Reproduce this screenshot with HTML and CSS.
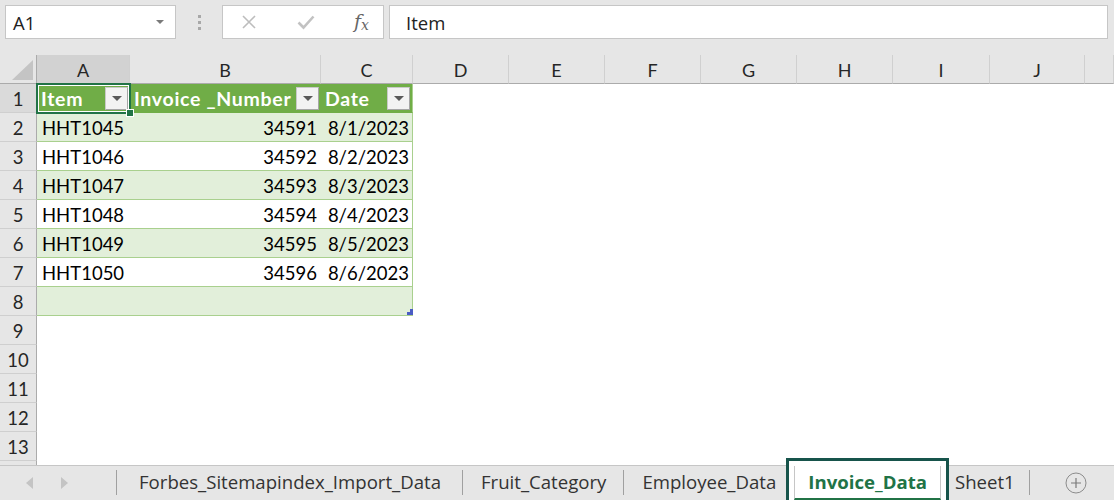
FILE: index.html
```html
<!DOCTYPE html>
<html lang="en">
<head>
<meta charset="utf-8">
<title>Invoice_Data</title>
<link rel="stylesheet" href="styles.css">
</head>
<body>
<div class="app">
  <div class="formula-bar">
    <div class="name-box">
      <span>A1</span>
      <svg class="caret" width="8" height="5" viewBox="0 0 8 5"><path d="M0 0h8L4 4z" fill="#7a7a7a"/></svg>
    </div>
    <div class="grip"><i></i><i></i><i></i></div>
    <div class="fx-box">
      <svg class="fx-icon" width="16" height="16" viewBox="0 0 16 16"><path d="M2 2l12 12M14 2L2 14" stroke="#bdbdbd" stroke-width="1.6" fill="none"/></svg>
      <svg class="fx-icon" width="18" height="16" viewBox="0 0 18 16"><path d="M1.5 8.5l5 5L16.5 2.5" stroke="#c2c2c2" stroke-width="2.6" fill="none"/></svg>
      <span class="fx">f<sub>x</sub></span>
    </div>
    <div class="formula-input">Item</div>
  </div>

  <div class="sheet">
    <div class="row col-heads">
      <div class="corner"><span class="corner-tri"></span></div>
      <div class="ch active">A</div>
      <div class="ch">B</div>
      <div class="ch">C</div>
      <div class="ch">D</div>
      <div class="ch">E</div>
      <div class="ch">F</div>
      <div class="ch">G</div>
      <div class="ch">H</div>
      <div class="ch">I</div>
      <div class="ch">J</div>
      <div class="ch"></div>
    </div>

    <div class="row">
      <div class="rh active">1</div>
      <div class="c th">Item<span class="filter"></span></div>
      <div class="c th">Invoice _Number<span class="filter"></span></div>
      <div class="c th last">Date<span class="filter"></span></div>
      <div class="blank"></div>
    </div>
    <div class="row band">
      <div class="rh">2</div>
      <div class="c">HHT1045</div>
      <div class="c num">34591</div>
      <div class="c num last">8/1/2023</div>
      <div class="blank"></div>
    </div>
    <div class="row">
      <div class="rh">3</div>
      <div class="c">HHT1046</div>
      <div class="c num">34592</div>
      <div class="c num last">8/2/2023</div>
      <div class="blank"></div>
    </div>
    <div class="row band">
      <div class="rh">4</div>
      <div class="c">HHT1047</div>
      <div class="c num">34593</div>
      <div class="c num last">8/3/2023</div>
      <div class="blank"></div>
    </div>
    <div class="row">
      <div class="rh">5</div>
      <div class="c">HHT1048</div>
      <div class="c num">34594</div>
      <div class="c num last">8/4/2023</div>
      <div class="blank"></div>
    </div>
    <div class="row band">
      <div class="rh">6</div>
      <div class="c">HHT1049</div>
      <div class="c num">34595</div>
      <div class="c num last">8/5/2023</div>
      <div class="blank"></div>
    </div>
    <div class="row">
      <div class="rh">7</div>
      <div class="c">HHT1050</div>
      <div class="c num">34596</div>
      <div class="c num last">8/6/2023</div>
      <div class="blank"></div>
    </div>
    <div class="row band">
      <div class="rh">8</div>
      <div class="c"></div>
      <div class="c"></div>
      <div class="c last"></div>
      <div class="blank"></div>
    </div>
    <div class="row plain"><div class="rh">9</div><div class="blank"></div></div>
    <div class="row plain"><div class="rh">10</div><div class="blank"></div></div>
    <div class="row plain"><div class="rh">11</div><div class="blank"></div></div>
    <div class="row plain"><div class="rh">12</div><div class="blank"></div></div>
    <div class="row plain"><div class="rh">13</div><div class="blank"></div></div>
    <div class="row plain"><div class="rh"></div><div class="blank"></div></div>

    <div class="selection"><span class="fill-handle"></span></div>
    <div class="table-resize"></div>
  </div>

  <div class="tabbar">
    <div class="nav">
      <svg width="8" height="12" viewBox="0 0 8 12"><path d="M7 0v12L0 6z" fill="#c4c4c4"/></svg>
      <svg width="8" height="12" viewBox="0 0 8 12"><path d="M1 0v12l7-6z" fill="#c4c4c4"/></svg>
    </div>
    <div class="tab wide">Forbes_Sitemapindex_Import_Data</div>
    <div class="tab">Fruit_Category</div>
    <div class="tab">Employee_Data</div>
    <div class="tab current">Invoice_Data</div>
    <div class="tab">Sheet1</div>
    <div class="add">
      <svg width="22" height="22" viewBox="0 0 22 22"><circle cx="11" cy="11" r="10" fill="none" stroke="#8c8c8c" stroke-width="1"/><path d="M11 6v10M6 11h10" stroke="#7a7a7a" stroke-width="1.2"/></svg>
    </div>
  </div>
</div>
</body>
</html>
```

FILE: styles.css
```css
* { box-sizing: border-box; }

html, body {
  margin: 0;
  padding: 0;
}

body {
  width: 1114px;
  height: 500px;
  overflow: hidden;
  background: #e6e6e6;
  font-family: "Open Sans", "Noto Sans", sans-serif;
  color: #222;
}

.app {
  width: 1114px;
  height: 500px;
  display: flex;
  flex-direction: column;
}

/* ---------- formula bar ---------- */
.formula-bar {
  height: 55px;
  flex: 0 0 55px;
  display: flex;
  align-items: flex-start;
  padding: 5px 6px 0 5px;
  background: #e6e6e6;
}

.name-box {
  width: 171px;
  height: 34px;
  background: #fff;
  border: 1px solid #c6c6c6;
  display: flex;
  align-items: center;
  justify-content: space-between;
  padding: 0 11px 0 7px;
  font-size: 18.5px;
  color: #222;
}

.caret { margin-top: 1px; }

.grip {
  width: 46px;
  height: 34px;
  display: flex;
  flex-direction: column;
  align-items: center;
  justify-content: center;
  gap: 3px;
}

.grip i {
  display: block;
  width: 3px;
  height: 3px;
  background: #a8a8a8;
}

.fx-box {
  width: 162px;
  height: 34px;
  background: #fff;
  border: 1px solid #c6c6c6;
  display: flex;
  align-items: center;
  padding: 0 14px 0 18px;
  justify-content: space-between;
}

.fx {
  font-family: "DejaVu Serif", "Liberation Serif", serif;
  font-style: italic;
  font-size: 19px;
  color: #666;
  line-height: 1;
}

.fx sub {
  font-size: 14px;
  vertical-align: -2px;
}

.formula-input {
  flex: 1;
  height: 34px;
  margin-left: 5px;
  background: #fff;
  border: 1px solid #c6c6c6;
  display: flex;
  align-items: center;
  padding-left: 16px;
  font-size: 18.5px;
  color: #222;
}

/* ---------- worksheet ---------- */
.sheet {
  position: relative;
  flex: 0 0 410px;
  height: 410px;
  overflow: hidden;
  background: #fff;
  font-family: "Lato", "Open Sans", sans-serif;
}

.row {
  display: grid;
  grid-template-columns: 37px 93px 191px 92px 1fr;
  height: 29px;
}

.row.plain {
  grid-template-columns: 37px 1fr;
}

.row.col-heads {
  grid-template-columns: 37px 93px 191px 92px 96px 96px 96px 96px 96px 97px 95px 1fr;
  background: #e6e6e6;
}

.corner {
  position: relative;
  background: #e6e6e6;
  border-right: 1px solid #ababab;
  border-bottom: 1px solid #ababab;
}

.corner-tri {
  position: absolute;
  right: 3px;
  bottom: 3px;
  width: 21px;
  height: 20px;
  background: #c4c4c4;
  clip-path: polygon(100% 0, 100% 100%, 0 100%);
}

.ch {
  background: #e6e6e6;
  border-right: 1px solid #d0d0d0;
  border-bottom: 1px solid #ababab;
  display: flex;
  align-items: center;
  justify-content: center;
  font-size: 18px;
  color: #262626;
  padding-top: 2px;
}

.ch.active { background: #d2d2d2; }

.rh {
  background: #e6e6e6;
  border-right: 1px solid #ababab;
  border-bottom: 1px solid #cfcfcf;
  display: flex;
  align-items: center;
  justify-content: center;
  font-size: 18.5px;
  color: #262626;
  padding-top: 1px;
}

.rh.active { background: #dadada; }

.c {
  position: relative;
  display: flex;
  align-items: center;
  padding: 1px 4px 0 5px;
  font-size: 18.5px;
  color: #000;
  white-space: nowrap;
  border-bottom: 1px solid #a9d08e;
}

.c.num { justify-content: flex-end; padding-right: 4px; }
.c.last { border-right: 1px solid #a9d08e; padding-right: 3px; }

.band .c { background: #e2efda; }

.c.th {
  background: #70ad47;
  color: #fff;
  font-weight: 700;
  font-size: 19.5px;
  letter-spacing: 0.7px;
  padding-left: 4px;
  border-bottom-color: #70ad47;
}

.filter {
  position: absolute;
  right: 2px;
  top: 3px;
  width: 23px;
  height: 23px;
  background: #f3f3f3;
  border: 1px solid #c9c9c9;
  border-right-color: #a6a6a6;
  border-bottom-color: #a6a6a6;
}

.filter::after {
  content: "";
  position: absolute;
  left: 6px;
  top: 8px;
  border-left: 5px solid transparent;
  border-right: 5px solid transparent;
  border-top: 5px solid #595959;
}

.selection {
  position: absolute;
  left: 36px;
  top: 28px;
  width: 95px;
  height: 31px;
  border: 2px solid #217346;
  box-shadow: inset 0 0 0 1px #fff;
  pointer-events: none;
}

.fill-handle {
  position: absolute;
  right: -5px;
  bottom: -5px;
  width: 8px;
  height: 8px;
  background: #217346;
  border: 1px solid #fff;
}

.table-resize {
  position: absolute;
  left: 410px;
  top: 254px;
  width: 3px;
  height: 6px;
  background: #4a5cc4;
}

.table-resize::before {
  content: "";
  position: absolute;
  left: -3px;
  top: 3px;
  width: 3px;
  height: 3px;
  background: #4a5cc4;
}

/* ---------- sheet tabs ---------- */
.tabbar {
  flex: 1;
  display: flex;
  align-items: stretch;
  background: #e6e6e6;
  border-top: 1px solid #c6c6c6;
  font-size: 18.6px;
  color: #333;
}

.nav {
  width: 117px;
  display: flex;
  align-items: center;
  gap: 26px;
  padding-left: 26px;
  border-right: 1px solid #a0a0a0;
  margin: 4px 0 5px;
}

.tab {
  display: flex;
  align-items: center;
  padding: 0 18px 4px;
  white-space: nowrap;
  position: relative;
}

.tab::after {
  content: "";
  position: absolute;
  right: 0;
  top: 4px;
  bottom: 5px;
  width: 1px;
  background: #a0a0a0;
}

.tab.wide { padding: 0 22px 4px; }

.tab.current {
  background: #fff;
  color: #217346;
  font-weight: 700;
  padding: 0 13px 2px;
  border-left: 1px solid #c6c6c6;
  border-right: 1px solid #c6c6c6;
  border-bottom: 2px solid #217346;
  box-shadow: 0 0 0 5px #fff, 0 0 0 8px #17544b;
  z-index: 1;
}

.tab.current::after { display: none; }

.tab.current + .tab { padding: 0 15px 4px 14px; }

.add {
  display: flex;
  align-items: center;
  padding-left: 35px;
}
```
